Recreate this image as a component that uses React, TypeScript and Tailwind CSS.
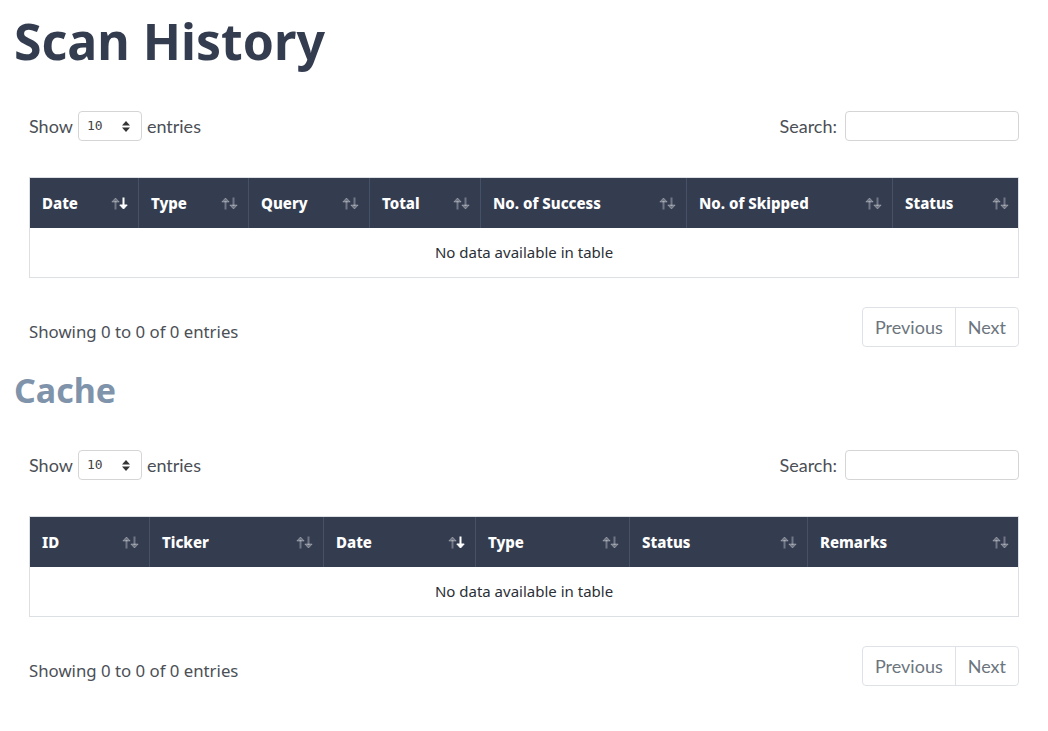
type Col = { label: string; width: number; sorted?: boolean };

const scanCols: Col[] = [
  { label: 'Date', width: 108, sorted: true },
  { label: 'Type', width: 110 },
  { label: 'Query', width: 121 },
  { label: 'Total', width: 111 },
  { label: 'No. of Success', width: 206 },
  { label: 'No. of Skipped', width: 206 },
  { label: 'Status', width: 127 },
];

const cacheCols: Col[] = [
  { label: 'ID', width: 119 },
  { label: 'Ticker', width: 174 },
  { label: 'Date', width: 152, sorted: true },
  { label: 'Type', width: 154 },
  { label: 'Status', width: 178 },
  { label: 'Remarks', width: 212 },
];

const plex = { fontFamily: '"Noto Sans", "Open Sans", sans-serif' };
const lato = { fontFamily: 'Lato, "Noto Sans", sans-serif' };

function SortIcon({ sorted }: { sorted?: boolean }) {
  return (
    <svg width="17" height="13" viewBox="0 0 17 13" fill="none">
      <g className="stroke-white/30 fill-white/30" strokeWidth="2">
        <path d="M4.5 12.5 V4" />
        <path d="M0.8 5 L4.5 1 L8.2 5 Z" strokeWidth="1" />
      </g>
      <g className={sorted ? 'stroke-white fill-white' : 'stroke-white/30 fill-white/30'} strokeWidth="2">
        <path d="M12.5 0.5 V9" />
        <path d="M8.8 8 L12.5 12 L16.2 8 Z" strokeWidth="1" />
      </g>
    </svg>
  );
}

function Controls() {
  return (
    <div className="flex h-[30px] items-center justify-between text-[18px] text-[#4b4f56]" style={lato}>
      <div className="flex items-center gap-[5px]">
        <span>Show</span>
        <div className="flex h-[30px] w-[64px] items-center justify-between rounded-[4px] border border-[#d5d5d5] pl-[8px] pr-[11px] text-[13px] text-[#444]" style={{ fontFamily: '"DejaVu Sans Mono", monospace' }}>
          <span>10</span>
          <svg width="8" height="11" viewBox="0 0 8 11" className="fill-[#333]">
            <path d="M4 0 L8 4.5 H0 Z" />
            <path d="M0 6.5 H8 L4 11 Z" />
          </svg>
        </div>
        <span>entries</span>
      </div>
      <div className="flex items-center gap-[8px]">
        <span>Search:</span>
        <div className="h-[30px] w-[174px] rounded-[4px] border border-[#d5d5d5]" />
      </div>
    </div>
  );
}

function DataTable({ cols }: { cols: Col[] }) {
  return (
    <div className="border border-[#dcdfe3]">
      <div className="flex h-[50px] bg-[#343d50] text-white" style={{ fontFamily: '"Noto Sans", sans-serif' }}>
        {cols.map((c, i) => (
          <div
            key={c.label}
            style={{ width: c.width }}
            className={`flex shrink-0 items-center justify-between pl-[12px] pr-[10px] text-[15px] font-extrabold ${i > 0 ? 'border-l border-[#465066]' : ''} ${i === cols.length - 1 ? 'grow' : ''}`}
          >
            <span>{c.label}</span>
            <SortIcon sorted={c.sorted} />
          </div>
        ))}
      </div>
      <div className="flex h-[49px] items-center justify-center text-[15px] text-[#2b2f36]" style={plex}>
        No data available in table
      </div>
    </div>
  );
}

function Footer() {
  return (
    <div className="flex items-start justify-between">
      <span className="mt-[12px] text-[16.8px] text-[#4b4f56]" style={plex}>
        Showing 0 to 0 of 0 entries
      </span>
      <div className="flex h-[40px] rounded-[4px] border border-[#dee2e6] text-[18px] text-[#6c757d]" style={lato}>
        <span className="flex items-center border-r border-[#dee2e6] px-[12px]">Previous</span>
        <span className="flex items-center px-[12px]">Next</span>
      </div>
    </div>
  );
}

function Section({ cols }: { cols: Col[] }) {
  return (
    <div className="px-[29px]">
      <Controls />
      <div className="mt-[36px]">
        <DataTable cols={cols} />
      </div>
      <div className="mt-[29px]">
        <Footer />
      </div>
    </div>
  );
}

export default function App() {
  return (
    <div className="min-h-screen w-[1048px] bg-white" style={plex}>
      <h1 className="pl-[14px] pt-[5px] text-[50px] font-bold leading-[72px] text-[#343d50]">Scan History</h1>
      <div className="mt-[34px]">
        <Section cols={scanCols} />
      </div>
      <h2 className="mt-[21px] pl-[14px] text-[34px] font-bold leading-[44px] text-[#7f93ab]">Cache</h2>
      <div className="mt-[38px]">
        <Section cols={cacheCols} />
      </div>
    </div>
  );
}
